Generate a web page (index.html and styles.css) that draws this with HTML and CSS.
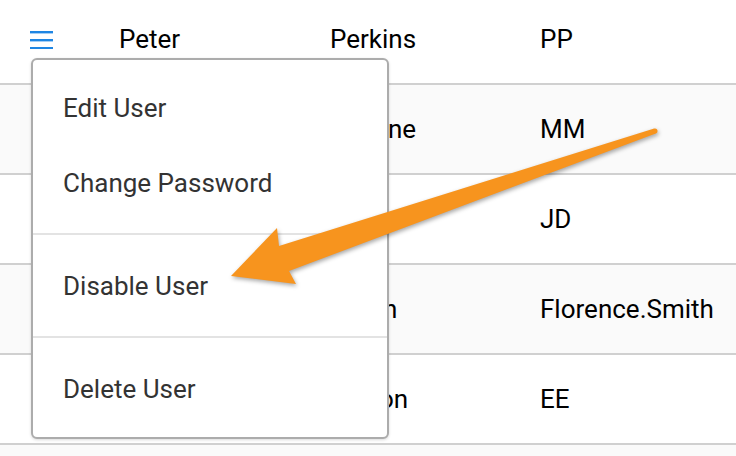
FILE: index.html
```html
<!DOCTYPE html>
<html lang="en">
<head>
    <meta charset="UTF-8">
    <meta name="viewport" content="width=device-width, initial-scale=1.0">
    <title>Users</title>
    <link rel="stylesheet" href="styles.css">
</head>
<body>
    <div class="users">
        <div class="row">
            <div class="cell icon-cell">
                <svg class="menu-icon" width="23" height="20" viewBox="0 0 23 20">
                    <rect x="0" y="2" width="23" height="2.4"/>
                    <rect x="0" y="10" width="23" height="2.4"/>
                    <rect x="0" y="18" width="23" height="2.4"/>
                </svg>
            </div>
            <div class="cell">Peter</div>
            <div class="cell">Perkins</div>
            <div class="cell">PP</div>
        </div>
        <div class="row">
            <div class="cell icon-cell"></div>
            <div class="cell">Mary</div>
            <div class="cell">Malone</div>
            <div class="cell">MM</div>
        </div>
        <div class="row">
            <div class="cell icon-cell"></div>
            <div class="cell">John</div>
            <div class="cell">Doe</div>
            <div class="cell">JD</div>
        </div>
        <div class="row">
            <div class="cell icon-cell"></div>
            <div class="cell">Florence</div>
            <div class="cell">Smith</div>
            <div class="cell">Florence.Smith</div>
        </div>
        <div class="row">
            <div class="cell icon-cell"></div>
            <div class="cell">Eddie</div>
            <div class="cell">Edison</div>
            <div class="cell">EE</div>
        </div>
        <div class="row"></div>
    </div>

    <div class="dropdown">
        <div class="item">Edit User</div>
        <div class="item">Change Password</div>
        <div class="divider"></div>
        <div class="item">Disable User</div>
        <div class="divider"></div>
        <div class="item">Delete User</div>
    </div>

    <svg class="arrow" width="736" height="456" viewBox="0 0 736 456">
        <polygon points="654.2,128.6 279,246 277,228 231,276 296,284 289,271 655.8,133.4"/>
        <circle cx="655" cy="131" r="2.5"/>
    </svg>
</body>
</html>
```

FILE: styles.css
```css
html, body {
    height: 100%;
}
body {
    margin: 0;
    font-family: Roboto, "Liberation Sans", Arial, sans-serif;
    font-size: 26px;
    color: #000;
    background-color: #fff;
    overflow: hidden;
}
.users {
    margin-top: -5px;
}
.row {
    display: grid;
    grid-template-columns: 119px 211px 210px 1fr;
    align-items: center;
    height: 88px;
    border-bottom: 2px solid #d0d0d0;
    background-color: #fff;
}
.row:nth-child(even) {
    background-color: #fafafa;
}
.icon-cell {
    padding-left: 30px;
    display: flex;
    align-items: center;
}
.menu-icon {
    fill: #1f86e3;
}
.dropdown {
    position: absolute;
    left: 31px;
    top: 58px;
    width: 358px;
    height: 381px;
    box-sizing: border-box;
    padding: 10px 0;
    background-color: #fff;
    border: 2px solid #acacac;
    border-radius: 6px;
    box-shadow: 0 1px 3px rgba(0, 0, 0, 0.15);
}
.item {
    height: 75px;
    display: flex;
    align-items: center;
    padding-left: 30px;
    color: #333;
}
.divider {
    height: 2px;
    margin: 13px 0;
    background-color: #e3e3e3;
}
.arrow {
    position: absolute;
    left: 0;
    top: 0;
    fill: #f7941e;
    filter: drop-shadow(1px 2px 2px rgba(0, 0, 0, 0.35));
}
```
